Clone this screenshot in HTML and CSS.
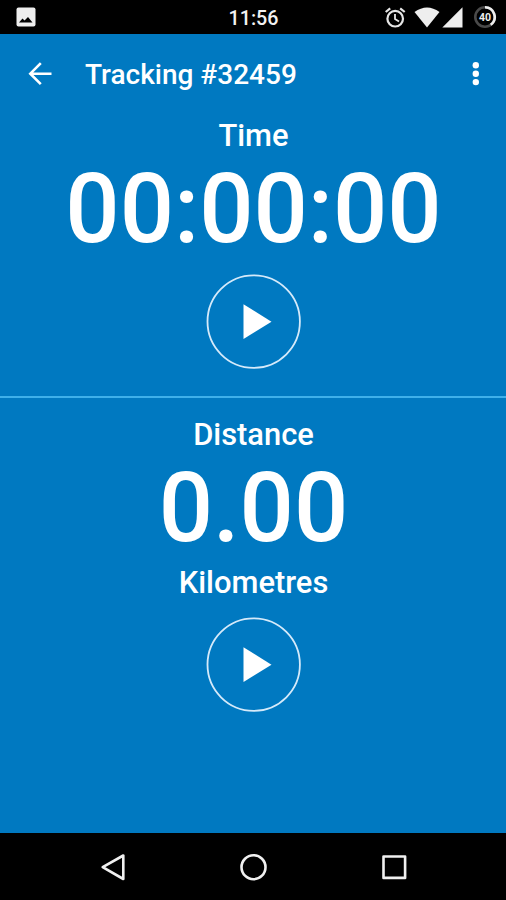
FILE: index.html
```
<!DOCTYPE html>
<html lang="en">
    <head>
        <title>Tracking #32459</title>
        <meta charset="utf-8">
        <link rel="stylesheet" href="styles.css">
    </head>

    <body>
        <div class="status">
            <svg class="picture" width="20" height="20" viewBox="0 0 20 20">
                <rect x="0.5" y="0.5" width="19" height="19" rx="2" fill="#eee"/>
                <path d="M3 15.5L6.5 11.5L8.5 13.5L12 10L16.5 15.5Z" fill="#000"/>
            </svg>
            <span class="clock">11:56</span>
            <div class="signals">
                <svg width="22" height="22" viewBox="0 0 22 22" fill="none" stroke="#e6e6e6">
                    <circle cx="11.2" cy="12.7" r="7.8" stroke-width="2.2"/>
                    <path d="M11 8V13L15 15.6" stroke-width="1.8"/>
                    <path d="M1.7 6L6.2 2.3M20.7 6L16.2 2.3" stroke-width="2.2"/>
                </svg>
                <svg class="wifi" width="26" height="22" viewBox="0 0 26 22">
                    <path d="M0.5 6Q13 -3 25.5 6L13 21.5Z" fill="#eee"/>
                </svg>
                <svg class="cell" width="21" height="21" viewBox="0 0 21 21">
                    <path d="M0.3 20.5H20.5V0.3Z" fill="#eee"/>
                </svg>
                <svg class="battery" width="24" height="24" viewBox="0 0 24 24">
                    <circle cx="12" cy="12" r="9.7" fill="none" stroke="#4a4a4a" stroke-width="2.6"/>
                    <path d="M12 2.3A9.7 9.7 0 0 1 17.7 19.8" fill="none" stroke="#eee" stroke-width="2.6"/>
                    <text x="12" y="15.9" class="level">40</text>
                </svg>
            </div>
        </div>

        <header>
            <svg class="back" width="24" height="24" viewBox="0 0 24 24" fill="none" stroke="#fff" stroke-width="2.6">
                <path d="M23.5 11.7H2.8M12.8 1.2L2.3 11.7L12.8 22.2"/>
            </svg>
            <h1>Tracking #32459</h1>
            <svg class="more" width="8" height="26" viewBox="0 0 8 26" fill="#fff">
                <circle cx="3.8" cy="4.2" r="3.2"/>
                <circle cx="3.8" cy="12.7" r="3.2"/>
                <circle cx="3.8" cy="21.1" r="3.2"/>
            </svg>
        </header>

        <main>
            <section class="time">
                <p class="label">Time</p>
                <p class="value">00:00:00</p>
                <svg class="play" width="96" height="96" viewBox="0 0 96 96">
                    <circle cx="47.7" cy="47.6" r="46.2" fill="none" stroke="#d5eafa" stroke-width="1.8"/>
                    <path d="M37.5 30.3V65.1L65.5 47.7Z" fill="#fff"/>
                </svg>
            </section>

            <section class="distance">
                <p class="label">Distance</p>
                <p class="value">0.00</p>
                <p class="label unit">Kilometres</p>
                <svg class="play" width="96" height="96" viewBox="0 0 96 96">
                    <circle cx="47.7" cy="47.6" r="46.2" fill="none" stroke="#d5eafa" stroke-width="1.8"/>
                    <path d="M37.5 30.3V65.1L65.5 47.7Z" fill="#fff"/>
                </svg>
            </section>
        </main>

        <footer>
            <svg width="28" height="28" viewBox="0 0 28 28" fill="none" stroke="#f0f0f0" stroke-width="2.6" stroke-linejoin="round">
                <path d="M24.3 2.5V26L3.7 14.2Z"/>
            </svg>
            <svg width="28" height="28" viewBox="0 0 28 28" fill="none" stroke="#f0f0f0" stroke-width="2.6">
                <circle cx="13.5" cy="14.2" r="12"/>
            </svg>
            <svg width="28" height="28" viewBox="0 0 28 28" fill="none" stroke="#f0f0f0" stroke-width="2.6" stroke-linejoin="round">
                <rect x="2.5" y="3.5" width="21.6" height="21.4"/>
            </svg>
        </footer>
    </body>
</html>
```

FILE: styles.css
```
* {
    box-sizing: border-box;
    font-family: Roboto, sans-serif;
}
body {
    margin: 0px;
    width: 506px;
    height: 900px;
    display: flex;
    flex-direction: column;
    overflow: hidden;
    background: #0079c1;
    color: #fff;
    font-weight: 500;
}
svg {
    display: block;
    flex: none;
}
.status {
    height: 34px;
    display: grid;
    grid-template-columns: 1fr auto 1fr;
    align-items: center;
    padding: 0px 9px 0px 16px;
    background: #000;
}
.clock {
    font-size: 19.7px;
    line-height: 24px;
    margin-top: 3px;
    padding-right: 6px;
    color: #f2f2f2;
}
.signals {
    display: flex;
    justify-content: flex-end;
    align-items: center;
}
.wifi {
    margin-left: 8px;
}
.cell {
    margin-left: 2px;
}
.battery {
    margin-left: 10px;
}
.level {
    font-size: 10.5px;
    font-weight: bold;
    text-anchor: middle;
    fill: #eee;
}
header {
    height: 80px;
    display: flex;
    align-items: center;
    padding: 0px 26px 0px 28px;
}
header h1 {
    flex: 1;
    margin: 2px 0px 0px 33px;
    font-size: 28px;
    font-weight: 500;
    line-height: 36px;
}
section {
    display: flex;
    flex-direction: column;
    align-items: center;
    padding-left: 1px;
}
.time {
    height: 284px;
    padding-top: 4px;
    border-bottom: solid 2px #3fb0ea;
}
.distance {
    height: 435px;
    padding-top: 19px;
}
.label {
    margin: 0px;
    font-size: 30.9px;
    line-height: 36px;
}
.value {
    margin: 7px 0px 0px 0px;
    font-size: 95.6px;
    line-height: 96px;
}
.unit {
    margin-top: 9px;
}
.play {
    margin: 17px 0px 0px 1px;
}
.distance .play {
    margin-top: 16px;
}
footer {
    height: 67px;
    display: flex;
    justify-content: center;
    align-items: center;
    gap: 113px;
    padding-left: 2px;
    background: #000;
}
```
